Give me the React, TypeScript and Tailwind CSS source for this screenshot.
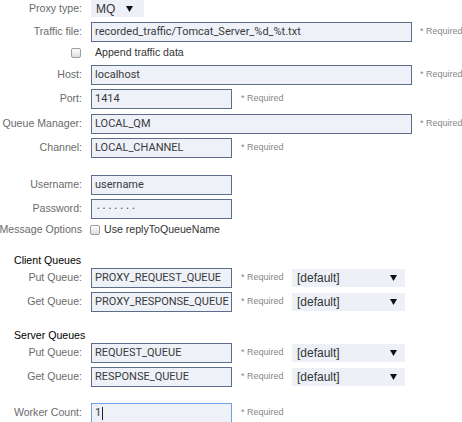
import React from "react";

const labelCls =
  "w-[82px] shrink-0 flex justify-end whitespace-nowrap text-[10.6px] text-[#6b6b6b]";

function Row({
  label,
  className,
  children,
}: {
  label: React.ReactNode;
  className: string;
  children: React.ReactNode;
}) {
  return (
    <div className={"flex items-center " + className}>
      <div className={labelCls}>{label}</div>
      <div className="ml-[9px] flex items-center">{children}</div>
    </div>
  );
}

function TextBox({
  value,
  wide,
  focused,
}: {
  value: React.ReactNode;
  wide?: boolean;
  focused?: boolean;
}) {
  return (
    <div
      className={
        (wide ? "w-[321px] " : "w-[141px] ") +
        (focused ? "border-[#6fa0e0] " : "border-[#5d6d8a] ") +
        "h-[20px] border bg-[#eef1f8] pl-[3px] flex items-center overflow-hidden whitespace-nowrap font-['Roboto',Arial,sans-serif] text-[11px] text-[#3a3a3a]"
      }
    >
      {value}
    </div>
  );
}

function Required({ wide }: { wide?: boolean }) {
  return (
    <span
      className={
        (wide ? "ml-[8px] " : "ml-[9px] w-[51px] ") +
        "whitespace-nowrap text-[9px] text-[#888]"
      }
    >
      * Required
    </span>
  );
}

function Arrow() {
  return (
    <svg width="7" height="6" viewBox="0 0 7 6">
      <polygon points="0,0 7,0 3.5,6" fill="#111" />
    </svg>
  );
}

function QueueSelect() {
  return (
    <div className="w-[113px] h-[18px] bg-[#edf0f7] flex items-center justify-between pl-[5px] pr-[8px] text-[12px] text-[#333]">
      <span>[default]</span>
      <Arrow />
    </div>
  );
}

function Checkbox() {
  return (
    <span className="inline-block w-[10px] h-[10px] rounded-[2px] border border-[#9c9c9c] bg-gradient-to-b from-[#fdfdfd] to-[#dedede]" />
  );
}

export default function App() {
  return (
    <div className="w-[462px] h-[422px] overflow-hidden bg-white font-['Liberation_Sans',Arial,sans-serif]">
      {/* PROXY TYPE */}
      <Row label="Proxy type:" className="h-[17px]">
        <div className="w-[53px] h-[17px] bg-[#edf0f7] flex items-center justify-between pl-[5px] pr-[11px] text-[12px] text-[#333]">
          <span>MQ</span>
          <Arrow />
        </div>
      </Row>

      <Row label="Traffic file:" className="mt-[5px]">
        <TextBox wide value="recorded_traffic/Tomcat_Server_%d_%t.txt" />
        <Required wide />
      </Row>

      <div className="flex items-center h-[14px] mt-[4px]">
        <div className="w-[82px] flex justify-end pr-[1px]">
          <Checkbox />
        </div>
        <span className="ml-[13px] text-[10.6px] text-[#333]">
          Append traffic data
        </span>
      </div>

      <Row label="Host:" className="mt-[5px]">
        <TextBox wide value="localhost" />
        <Required wide />
      </Row>

      <Row label="Port:" className="mt-[4px]">
        <TextBox value="1414" />
        <Required />
      </Row>

      <Row label="Queue Manager:" className="mt-[5px]">
        <TextBox wide value="LOCAL_QM" />
        <Required wide />
      </Row>

      <Row label="Channel:" className="mt-[4px]">
        <TextBox value="LOCAL_CHANNEL" />
        <Required />
      </Row>

      {/* CREDENTIALS */}
      <Row label="Username:" className="mt-[17px]">
        <TextBox value="username" />
      </Row>

      <Row label="Password:" className="mt-[4px]">
        <TextBox
          value={
            <span className="text-[7px] tracking-[3.5px] text-[#555] pl-[2px]">
              •••••••
            </span>
          }
        />
      </Row>

      <div className="flex items-center h-[14px] mt-[4px]">
        <div className={labelCls}>Message Options</div>
        <div className="ml-[8px] flex items-center">
          <Checkbox />
          <span className="ml-[4px] text-[10.6px] text-[#333]">
            Use replyToQueueName
          </span>
        </div>
      </div>

      {/* CLIENT QUEUES */}
      <div className="h-[14px] mt-[17px] pl-[14px] flex items-center text-[10.6px] text-black">
        Client Queues
      </div>

      <Row label="Put Queue:" className="mt-0">
        <TextBox value="PROXY_REQUEST_QUEUE" />
        <Required />
        <QueueSelect />
      </Row>

      <Row label="Get Queue:" className="mt-[4px]">
        <TextBox value="PROXY_RESPONSE_QUEUE" />
        <Required />
        <QueueSelect />
      </Row>

      {/* SERVER QUEUES */}
      <div className="h-[14px] mt-[17px] pl-[14px] flex items-center text-[10.6px] text-black">
        Server Queues
      </div>

      <Row label="Put Queue:" className="mt-0">
        <TextBox value="REQUEST_QUEUE" />
        <Required />
        <QueueSelect />
      </Row>

      <Row label="Get Queue:" className="mt-[4px]">
        <TextBox value="RESPONSE_QUEUE" />
        <Required />
        <QueueSelect />
      </Row>

      <Row label="Worker Count:" className="mt-[16px]">
        <TextBox
          focused
          value={
            <>
              <span>1</span>
              <span className="ml-[1px] inline-block w-[1px] h-[13px] bg-[#222]" />
            </>
          }
        />
        <Required />
      </Row>
    </div>
  );
}
